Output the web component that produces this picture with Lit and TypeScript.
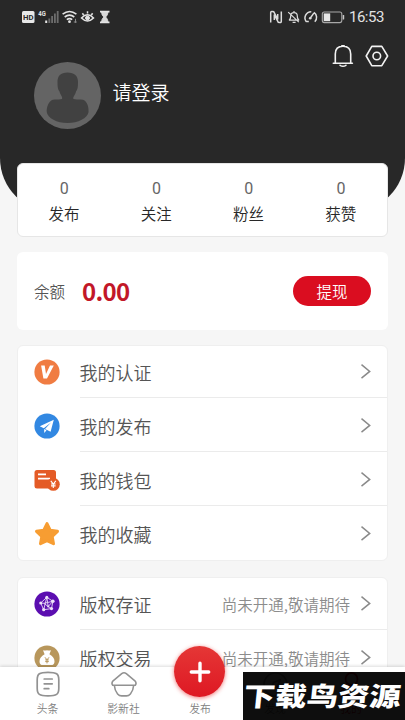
import { LitElement, html, css, type TemplateResult } from "lit";
import { customElement, property } from "lit/decorators.js";

const chevron = html`<svg width="12" height="16" viewBox="0 0 12 16" fill="none" stroke="#8a8a8a" stroke-width="1.5"><path d="M1.5 .7 L9.7 7.4 L1.5 14.1"/></svg>`;

const icons: Record<string, TemplateResult> = {
  verify: html`<svg width="26" height="26" viewBox="0 0 26 26"><circle cx="13" cy="13" r="12.6" fill="#f07c42"/><path d="M7.1 6.6h3.6l1.3 8.5 4-8.5h3.8L13 19.4H9.4z" fill="#fff"/></svg>`,
  publish: html`<svg width="26" height="26" viewBox="0 0 26 26"><circle cx="13" cy="13" r="12.6" fill="#3288e2"/><path d="M19.8 6.7 5.8 13.2l4 2L17 9.5l-6 6.5 5.6 2.8z" fill="#fff"/><path d="m10.1 16 .2 3.9 2.2-2.6z" fill="#fff"/></svg>`,
  wallet: html`<svg width="26" height="26" viewBox="0 0 26 26"><rect x=".5" y="3" width="21.5" height="18.5" rx="2.5" fill="#e45b26"/><path d="M4 7.4h8M4 11.6h12" stroke="#fff" stroke-width="1.7"/><circle cx="19.3" cy="17.3" r="6.5" fill="#e45b26"/><path d="m16.8 13.8 2.5 3.2 2.5-3.2M19.3 17v4M17 17h4.6M17 18.9h4.6" stroke="#fff" fill="none" stroke-width="1.1"/></svg>`,
  star: html`<svg width="26" height="26" viewBox="0 0 26 26"><path d="m13 2.6 3.2 6.6 7.3 1.1-5.3 5.1 1.3 7.3-6.5-3.1-6.5 3.1 1.3-7.3-5.3-5.1 7.3-1.1z" fill="#f79d32" stroke="#f79d32" stroke-width="3" stroke-linejoin="round"/></svg>`,
  evidence: html`<svg width="26" height="26" viewBox="0 0 26 26"><circle cx="13" cy="13" r="12.6" fill="#5b0eb0"/><g fill="none" stroke="#dcc8ef" stroke-width="1"><path d="m12.8 6.3 6.1 4-1.4 7.3-7.8 1.1-3-6.7zM12.8 6.3l-3.1 12.4M12.8 6.3l1.4 9.2 4.7-5.2-9 2 4.3 3.2 3.3 2.1M6.7 12l3.2.3"/></g><g fill="#eee3f8"><circle cx="12.8" cy="6.3" r="1.5"/><circle cx="18.9" cy="10.3" r="1.7"/><circle cx="17.5" cy="17.6" r="1.6"/><circle cx="9.7" cy="18.7" r="1.6"/><circle cx="6.7" cy="12" r="1.5"/><circle cx="14.2" cy="15.5" r="1"/></g></svg>`,
  trade: html`<svg width="26" height="26" viewBox="0 0 26 26"><circle cx="13" cy="13" r="12.6" fill="#b8975c"/><path d="M9 5.2q2 .8 4 0 2 .8 4 0l-1.6 4.1q5.1 3 5.1 7.1 0 3.6-3.6 3.6H9.1q-3.6 0-3.6-3.6 0-4.1 5.1-7.1z" fill="#fff"/><path d="m11 12.3 2 2.6 2-2.6M13 14.9v3.5M11.2 14.9h3.6M11.2 16.6h3.6" fill="none" stroke="#b8975c" stroke-width="1"/></svg>`,
};

@customElement("status-bar")
export class StatusBar extends LitElement {
  static styles = css`
    :host { display: block; height: 34px; color: #e4e4e4; }
    .bar { display: flex; justify-content: space-between; height: 34px; }
    svg { display: block; }
    .right { display: flex; }
    .time { width: 37px; font: 15px/34px Roboto, sans-serif; letter-spacing: -0.5px; color: #e2e2e2; margin-right: 19px; white-space: nowrap; }
    .hd { font: bold 8px Roboto, sans-serif; }
    .net { font: bold 7px Roboto, sans-serif; }
  `;
  render() {
    return html`<div class="bar">
      <svg width="120" height="34" viewBox="0 0 120 34" fill="none" stroke="#e4e4e4">
        <rect x="22" y="11" width="12.5" height="12" rx="1.5" fill="#e8e8e8" stroke="none"/>
        <text class="hd" x="23" y="20" fill="#282828" stroke="none" textLength="10.5" lengthAdjust="spacingAndGlyphs">HD</text>
        <text class="net" x="38.3" y="15.7" fill="#e4e4e4" stroke="none" textLength="7.5" lengthAdjust="spacingAndGlyphs">4G</text>
        <g stroke="none"><rect x="45.2" y="20.5" width="2" height="2.5" fill="#e4e4e4"/><g fill="#6d6d6d"><rect x="48.4" y="18.5" width="1.8" height="4.5"/><rect x="51.2" y="16" width="1.8" height="7"/><rect x="54" y="13.5" width="1.8" height="9.5"/><rect x="56.8" y="11" width="1.8" height="12"/></g></g>
        <path d="M62.6 14.2q6.9-5.4 13.8 0M64.7 17q4.8-3.7 9.6 0M66.8 19.6q2.7-2 5.4 0" stroke-width="1.6"/>
        <circle cx="69.5" cy="21.7" r="1.4" fill="#e4e4e4" stroke="none"/>
        <path d="m75.5 18.8v4M73.8 22h3" stroke="#8a8a8a" stroke-width="1"/>
        <path d="M81.5 18q6-6.500 12 0-6 6-12 0zM82.400 13.300l1.200 1.700M87.500 11.300v2.200M92.600 13.300 91.400 15" stroke-width="1.5"/>
        <circle cx="87.5" cy="18" r="2" fill="#e4e4e4" stroke-width="1"/>
        <path d="M100 11.700h9.500M100 22.300h9.500" stroke-width="1.8"/><path d="M101.500 12h6.500q0 3-2.300 5 2.300 2 2.300 5h-6.500q0-3 2.300-5-2.300-2-2.300-5z" fill="#d8d8d8" stroke-width=".8"/>
      </svg>
      <div class="right">
        <svg width="80" height="34" viewBox="0 0 80 34" fill="none" stroke="#dcdcdc">
          <path d="M1.700 22.500V12.700q.2-1.500 1.500-1.300l1.500.3 4 7.700V14M12.300 11.500v9.800q-.2 1.500-1.500 1.300l-1.500-.3-4-7.700V20" stroke-width="1.500"/>
          <path d="M20 20.200q1.700-.8 1.700-4.200 0-3.400 3.300-3.400t3.300 3.400q0 3.400 1.800 4.200H20zM25 11v1.600M23.600 22.300h3M19.200 12.100l10.600 10" stroke-width="1.2"/>
          <path d="M37.300 21.700a6.200 6.200 0 0 1 5-10M45 12.400a6.200 6.200 0 0 1 .8 9.400M39.800 21.600h-2.600M41 18.500l4-5.600" stroke-width="1.5"/>
          <circle cx="41.2" cy="18.2" r="1.3" fill="#dcdcdc" stroke="none"/>
          <rect x="53.3" y="12" width="19.5" height="10.6" rx="2" stroke="#a8a8a8" stroke-width="1.1"/><rect x="54.7" y="13.4" width="6.5" height="7.8" fill="#e6e6e6" stroke="none"/><rect x="73.7" y="15" width="1.5" height="4.6" rx=".5" fill="#c8c8c8" stroke="none"/>
        </svg>
        <div class="time">16:53</div>
      </div>
    </div>`;
  }
}

@customElement("menu-row")
export class MenuRow extends LitElement {
  @property() icon = "";
  @property() label = "";
  @property() note = "";
  static styles = css`
    :host { display: block; height: 54px; }
    .row { display: flex; height: 54px; padding-left: 16px; }
    svg { display: block; flex: none; }
    .icon { width: 45.5px; height: 52px; display: flex; align-items: center; }
    .body { flex: 1; height: 52px; display: flex; align-items: center; border-bottom: 1px solid #ebebeb; padding-right: 15px; box-sizing: border-box; white-space: nowrap; }
    :host([last]) .body { border-color: transparent; }
    .label { flex: 1; font-size: 18px; font-weight: 350; line-height: 26px; color: #555; }
    .note { font-size: 15.5px; font-weight: 350; line-height: 24px; color: #8c8c8c; margin-right: 10px; }
  `;
  render() {
    return html`<div class="row">
      <div class="icon">${icons[this.icon]}</div>
      <div class="body"><span class="label">${this.label}</span>${this.note ? html`<span class="note">${this.note}</span>` : ""}${chevron}</div>
    </div>`;
  }
}

@customElement("app-root")
export class AppRoot extends LitElement {
  static styles = css`
    :host { display: block; position: relative; width: 405px; height: 720px; overflow: hidden; background: #f6f6f6; font-family: "Noto Sans CJK SC", sans-serif; font-weight: 350; }
    svg { display: block; }
    .page { display: flex; flex-direction: column; height: 720px; }
    .scroll { height: 667px; overflow: hidden; flex: none; }
    .header { height: 212px; background: #282828; border-radius: 0 0 54px 54px; }
    .tools { display: flex; justify-content: flex-end; gap: 11px; padding: 10px 16px 0 0; height: 15px; }
    .user { display: flex; align-items: center; gap: 11.5px; padding: 3px 0 0 34px; height: 67px; }
    .login { color: #fff; font-size: 19px; line-height: 28px; margin-top: -8px; }
    .cards { padding: 0 17px; display: flex; flex-direction: column; margin-top: -49px; }
    .card { background: #fff; border-radius: 6px; box-sizing: border-box; }
    .stats { height: 74px; display: grid; grid-template-columns: repeat(4, 1fr); border: 1px solid #e6e6e6; }
    .stat { text-align: center; padding-top: 14px; }
    .num { font: 16px/22px Roboto, sans-serif; color: #666; }
    .cap { font-size: 15.5px; line-height: 22px; color: #282828; margin-top: 2px; }
    .balance { height: 78px; margin-top: 15px; display: flex; align-items: center; padding: 0 17px; }
    .bl { font-size: 15.5px; color: #555; width: 48px; white-space: nowrap; }
    .amount { flex: 1; font: bold 24px/30px "Noto Sans CJK SC", sans-serif; letter-spacing: -.7px; color: #c21728; }
    .cash { width: 78px; height: 30px; border-radius: 15px; background: #da0d20; color: #fff; font-size: 15.5px; line-height: 31px; text-align: center; }
    .list { margin-top: 15px; border: 1px solid #efefef; }
    .list.a { height: 216px; }
    .list.b { margin-top: 16px; height: 110px; }
    .tabs { flex: 1; background: #fff; display: grid; grid-template-columns: 95px 57px 96px 54px 98px; box-shadow: 0 -1px 3px rgba(0, 0, 0, .14); }
    .tab { display: flex; flex-direction: column; align-items: center; font-size: 10.8px; line-height: 16px; color: #808080; padding-top: 4px; gap: 2px; white-space: nowrap; }
    .tab.active { color: #da0d20; }
    .mid { padding-top: 33px; }
    .plus { position: absolute; left: 174px; top: 646px; width: 51px; height: 51px; border-radius: 50%; background: linear-gradient(#e53736, #de1823); box-shadow: 0 1px 4px rgba(230, 35, 35, .6); display: flex; align-items: center; justify-content: center; }
    .mark { position: absolute; left: 243px; top: 672px; width: 162px; height: 48px; background: rgba(0, 0, 0, .945); }
    .marktext { width: 156px; color: #fff; font-weight: 900; font-size: 31.4px; line-height: 46px; padding-left: 1px; white-space: nowrap; transform: skewX(-6deg) scaleY(.84); }
  `;
  private tab(label: string, icon: unknown, active = false) {
    return html`<div class="tab ${active ? "active" : ""}">${icon}<span>${label}</span></div>`;
  }
  render() {
    const news = html`<svg width="24" height="27" viewBox="0 0 24 27" fill="none" stroke="#929292" stroke-width="1.7" stroke-linecap="round"><path d="M12 1.3c8.5 0 10.8 1.5 10.8 7.6v8.3c0 6.2-2.3 7.7-10.8 7.7S1.200 23.400 1.200 17.200V8.900C1.200 2.800 3.500 1.300 12 1.300zM8.200 8h8M8.200 12.800h8M8.200 17.700h4.600"/></svg>`;
    const club = html`<svg width="28" height="27" viewBox="0 0 28 27" fill="none" stroke="#929292" stroke-width="1.6" stroke-linejoin="round"><path d="M11.700 2.700q2.300-1.800 4.600 0l8.600 7.100q2 2.300.4 4.400H2.700q-1.600-2.100.4-4.400zM4.300 14.200q.5 5.600 3.300 8.800 1.700 1.900 4 1.900h4.800q2.300 0 4-1.900 2.800-3.200 3.300-8.800"/></svg>`;
    const find = html`<svg width="27" height="27" viewBox="0 0 27 27" fill="none" stroke="#929292" stroke-width="1.7"><circle cx="13.5" cy="13.5" r="11.5"/><path d="m18 9-2.500 6.500L9 18l2.500-6.500z"/></svg>`;
    const mine = html`<svg width="27" height="27" viewBox="0 0 27 27" fill="none" stroke="#da0d20" stroke-width="1.8"><circle cx="13.5" cy="8" r="6"/><path d="M2.500 25q0-9 11-9t11 9z"/></svg>`;
    return html`<div class="page">
        <div class="scroll">
          <div class="header">
            <status-bar></status-bar>
            <div class="tools">
              <svg width="22" height="24" viewBox="0 0 22 24" fill="none" stroke="#f2f2f2" stroke-width="1.6" stroke-linecap="round"><path d="M1.300 19.300h19.100M3.300 18.800V10Q3.300 2.200 11 2.200T18.700 10v8.800M9.800 1.700h2.400M8.100 21.300q2.900 2 5.800 0"/></svg>
              <svg width="24" height="24" viewBox="0 0 24 24" fill="none" stroke="#f2f2f2" stroke-width="1.6" stroke-linejoin="round"><path d="M6.800 2.400h10L22.600 12l-5.800 9.700h-10L1.200 12z"/><circle cx="11.8" cy="12" r="3.8"/></svg>
            </div>
            <div class="user">
              <svg width="67" height="67" viewBox="0 0 67 67"><circle cx="33.5" cy="33.5" r="33.5" fill="#646464"/><path d="M33.500 10.500c7 0 10.500 3.500 10.500 9.500 0 5-.4 8-2 9.500-.8 4-3.500 5.500-2.500 7.500 2 .8 6 0 9.500.7 4.500 1.200 6 8.500 5.500 12.500-.7 5.700-10.500 10.800-21 10.800s-20-5.100-20.700-10.800c-.5-4 1.500-11.300 6-12.500 3.500-.7 7.200.1 9.200-.7 1-2-1.500-3.500-2.500-7.500-1.600-1.500-2-4.500-2-9.500 0-6 3-9.500 10-9.500z" fill="#414141"/></svg>
              <span class="login">请登录</span>
            </div>
          </div>
          <div class="cards">
            <div class="card stats">
              ${["发布", "关注", "粉丝", "获赞"].map((t) => html`<div class="stat"><div class="num">0</div><div class="cap">${t}</div></div>`)}
            </div>
            <div class="card balance"><span class="bl">余额</span><span class="amount">0.00</span><div class="cash">提现</div></div>
            <div class="card list a">
              <menu-row icon="verify" label="我的认证"></menu-row>
              <menu-row icon="publish" label="我的发布"></menu-row>
              <menu-row icon="wallet" label="我的钱包"></menu-row>
              <menu-row icon="star" label="我的收藏" last></menu-row>
            </div>
            <div class="card list b">
              <menu-row icon="evidence" label="版权存证" note="尚未开通,敬请期待"></menu-row>
              <menu-row icon="trade" label="版权交易" note="尚未开通,敬请期待" last></menu-row>
            </div>
          </div>
        </div>
        <div class="tabs">
          ${this.tab("头条", news)}${this.tab("影新社", club)}
          <div class="tab mid"><span>发布</span></div>
          ${this.tab("发现", find)}${this.tab("我的", mine, true)}
        </div>
      </div>
      <div class="plus"><svg width="22" height="22" viewBox="0 0 22 22" stroke="#fff" stroke-width="3.4" stroke-linecap="round"><path d="M11 2.300v17.400M2.300 11h17.400"/></svg></div>
      <div class="mark"><div class="marktext">下载鸟资源</div></div>`;
  }
}
